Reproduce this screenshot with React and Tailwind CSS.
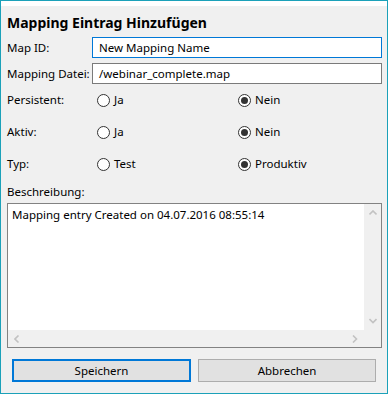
import React from 'react';

function Radio({ checked, label }) {
  return (
    <div className="flex items-center gap-[4px]">
      <span className="w-[13px] h-[13px] rounded-full border border-[#333] bg-white flex items-center justify-center">
        {checked && <span className="w-[7px] h-[7px] rounded-full bg-[#333]" />}
      </span>
      <span>{label}</span>
    </div>
  );
}

function RadioRow({ label, a, b, checked }) {
  return (
    <div className="h-[32px] flex items-center">
      <div className="w-[85px]">{label}</div>
      <div className="w-[141px] pl-[5px]">
        <Radio label={a} checked={checked === 0} />
      </div>
      <div className="pl-[5px]">
        <Radio label={b} checked={checked === 1} />
      </div>
    </div>
  );
}

function Chevron({ dir }) {
  const paths = {
    up: 'M0.5 4.5 L4 1 L7.5 4.5',
    down: 'M0.5 1 L4 4.5 L7.5 1',
    left: 'M4.5 0.5 L1 4 L4.5 7.5',
    right: 'M1 0.5 L4.5 4 L1 7.5',
  };
  const vert = dir === 'up' || dir === 'down';
  return (
    <svg width={vert ? 8 : 6} height={vert ? 6 : 8} viewBox={vert ? '0 0 8 6' : '0 0 6 8'}>
      <path d={paths[dir]} fill="none" stroke="#c2c2c2" strokeWidth="1.6" />
    </svg>
  );
}

export default function App() {
  return (
    <div className="w-[388px] h-[394px] border border-[#1ba1b9] bg-[#f0f0f0] flex flex-col font-['Noto_Sans',sans-serif] text-[11.5px] text-black whitespace-nowrap">
      <div className="h-[5px] bg-white" />
      <div className="pl-[6px] pr-[5px] flex flex-col">
        <div className="h-[22px] mt-[5px] flex items-center text-[14px] font-bold">
          Mapping Eintrag Hinzufügen
        </div>
        <div className="h-[21px] mt-[4px] flex items-center">
          <div className="w-[85px]">Map ID:</div>
          <div className="flex-1 h-full border border-[#0078d7] bg-white flex items-center px-[6px]">
            New Mapping Name
          </div>
        </div>
        <div className="h-[21px] mt-[5px] flex items-center">
          <div className="w-[85px]">Mapping Datei:</div>
          <div className="flex-1 h-full border border-[#7a7a7a] bg-white flex items-center px-[6px]">
            /webinar_complete.map
          </div>
        </div>
        <RadioRow label="Persistent:" a="Ja" b="Nein" checked={1} />
        <RadioRow label="Aktiv:" a="Ja" b="Nein" checked={1} />
        <RadioRow label="Typ:" a="Test" b="Produktiv" checked={1} />
        <div className="h-[23px] flex items-center">Beschreibung:</div>
        <div className="h-[145px] border border-[#828282] grid grid-cols-[1fr_17px] grid-rows-[1fr_17px]">
          <div className="bg-white px-[4px] pt-[2px]">Mapping entry Created on 04.07.2016 08:55:14</div>
          <div className="flex flex-col items-center justify-between py-[6px]">
            <Chevron dir="up" />
            <Chevron dir="down" />
          </div>
          <div className="flex items-center justify-between px-[6px]">
            <Chevron dir="left" />
            <Chevron dir="right" />
          </div>
          <div />
        </div>
        <div className="flex gap-[7px] ml-[5px] mt-[11px]">
          <button className="w-[179px] h-[23px] border-2 border-[#0078d7] bg-[#e1e1e1] flex items-center justify-center">
            Speichern
          </button>
          <button className="w-[178px] h-[23px] border border-[#adadad] bg-[#e1e1e1] flex items-center justify-center">
            Abbrechen
          </button>
        </div>
      </div>
    </div>
  );
}
